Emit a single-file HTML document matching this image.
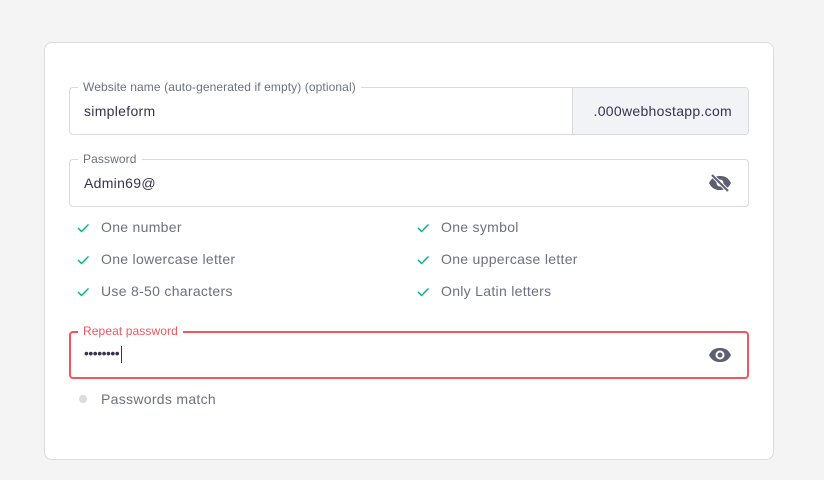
<!DOCTYPE html>
<html><head><meta charset="utf-8"><style>
*{box-sizing:border-box;margin:0;padding:0}
body{width:824px;height:480px;background:#f4f4f4;font-family:"Liberation Sans",sans-serif;position:relative;overflow:hidden}
.card{position:absolute;left:44px;top:42px;width:730px;height:418px;background:#fff;border:1px solid #dadce0;border-radius:8px}
.f{position:absolute;left:69px;width:680px;height:48px;border:1px solid #d8dae0;border-radius:4px;background:#fff}
.lab{position:absolute;left:8px;top:-8px;background:#fff;padding:0 5px;font-size:12px;color:#6d7081;line-height:14px;letter-spacing:0.1px}
.val{position:absolute;left:14px;top:15px;font-size:14px;color:#36344d;letter-spacing:0.3px}
.suf{position:absolute;right:0;top:0;width:176px;height:46px;background:#f2f3f6;border-left:1px solid #d8dae0;border-radius:0 3px 3px 0;font-size:14px;color:#36344d;text-align:right;padding:15px 16px 0 0;letter-spacing:0.3px}
.chk{position:absolute;font-size:14px;color:#6d7081;letter-spacing:0.3px}
.chk svg{position:absolute;left:-25px;top:3px}
.red{border:2px solid #f4555f}
.red .lab{color:#f4555f;top:-9px;left:7px}
.eye{position:absolute;right:16px;top:13px}
</style></head><body>
<div class="card"></div>
<div class="f" style="top:87px"><span class="lab">Website name (auto-generated if empty) (optional)</span><span class="val">simpleform</span><div class="suf">.000webhostapp.com</div></div>
<div class="f" style="top:159px"><span class="lab">Password</span><span class="val">Admin69@</span>
<svg class="eye" width="24" height="20" viewBox="0 0 24 20"><path d="M1 10C4 4 8 3 12 3s8 1 11 7c-3 6-7 7-11 7S4 16 1 10z" fill="#5c5f72"/><circle cx="12" cy="10" r="3.5" fill="#fff"/><path d="M4 2L20 18" stroke="#fff" stroke-width="4"/><path d="M4 2L20 18" stroke="#5c5f72" stroke-width="2"/></svg></div>
<div class="chk" style="left:101px;top:219px"><svg width="14" height="12"><path d="M2 6l3.5 3.5 7-7" stroke="#00b090" stroke-width="1.4" fill="none"/></svg>One number</div>
<div class="chk" style="left:101px;top:251px"><svg width="14" height="12"><path d="M2 6l3.5 3.5 7-7" stroke="#00b090" stroke-width="1.4" fill="none"/></svg>One lowercase letter</div>
<div class="chk" style="left:101px;top:283px"><svg width="14" height="12"><path d="M2 6l3.5 3.5 7-7" stroke="#00b090" stroke-width="1.4" fill="none"/></svg>Use 8-50 characters</div>
<div class="chk" style="left:441px;top:219px"><svg width="14" height="12"><path d="M2 6l3.5 3.5 7-7" stroke="#00b090" stroke-width="1.4" fill="none"/></svg>One symbol</div>
<div class="chk" style="left:441px;top:251px"><svg width="14" height="12"><path d="M2 6l3.5 3.5 7-7" stroke="#00b090" stroke-width="1.4" fill="none"/></svg>One uppercase letter</div>
<div class="chk" style="left:441px;top:283px"><svg width="14" height="12"><path d="M2 6l3.5 3.5 7-7" stroke="#00b090" stroke-width="1.4" fill="none"/></svg>Only Latin letters</div>
<div class="f red" style="top:331px"><span class="lab">Repeat password</span><span class="val" style="left:13px;top:12px;letter-spacing:-0.5px">••••••••<span style="display:inline-block;width:1px;height:17px;background:#36344d;vertical-align:middle;margin-left:2px"></span></span>
<svg class="eye" style="top:12px;right:15px" width="24" height="20" viewBox="0 0 24 20"><path d="M1 10C4 4 8 3 12 3s8 1 11 7c-3 6-7 7-11 7S4 16 1 10z" fill="#5c5f72"/><circle cx="12" cy="10" r="4.5" fill="#fff"/><circle cx="12" cy="10" r="2.5" fill="#5c5f72"/></svg></div>
<div style="position:absolute;left:79px;top:395px;width:8px;height:8px;border-radius:50%;background:#dadce0"></div>
<div class="chk" style="left:101px;top:391px">Passwords match</div>
</body></html>
